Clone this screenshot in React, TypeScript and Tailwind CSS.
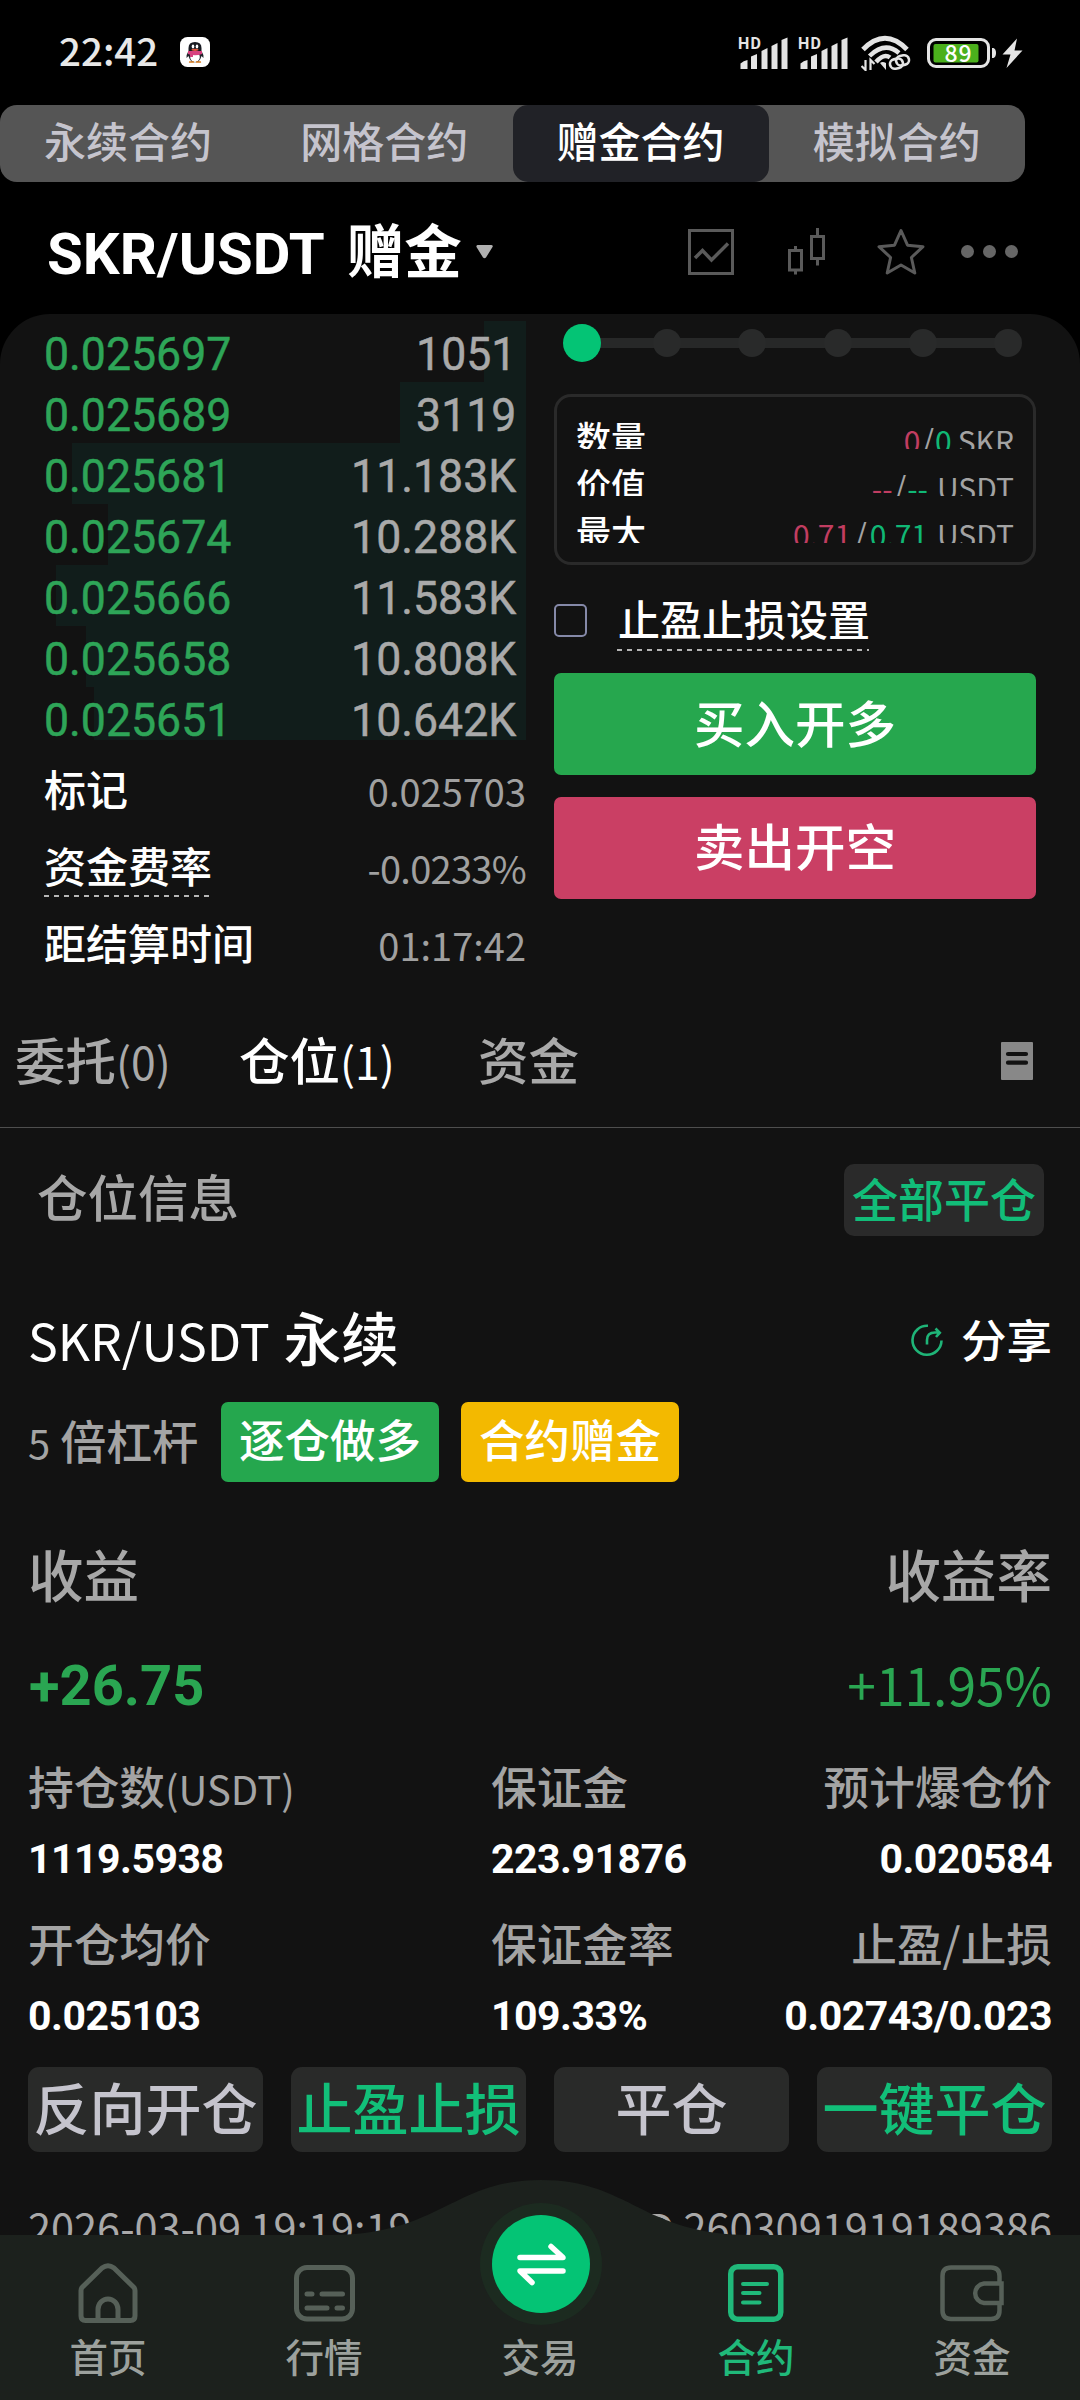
import React from "react";

const CJK = "font-['Noto_Sans_CJK_SC',sans-serif]";
const DIN = "font-['Roboto','Noto_Sans_CJK_SC',sans-serif]";

function SignalBars() {
  return (
    <svg className="overflow-visible" width="52" height="34" viewBox="0 0 52 34" fill="#e4e4e4">
      <text x="0" y="13" fontSize="16" fontWeight="700" fontFamily="Roboto, sans-serif" textLength="23">
        HD
      </text>
      <path d="M2.5 33v-5.500q3-3 7-3.500V33z" />
      <path d="M13 33V20.500l6-2.500V33z" />
      <path d="M23.500 33V15l6-3V33z" />
      <path d="M33.500 33V10l6-3V33z" />
      <path d="M43.500 33V4l6-2.500V33z" />
    </svg>
  );
}

function StatusBar() {
  return (
    <div className="flex h-[105px] items-center pl-[59px] pr-[57px]">
      <span className="mb-[6px] text-[38.5px] font-medium leading-none text-[#e8e8e8]">22:42</span>
      <svg className="ml-[22px] mb-[1px]" width="30" height="30" viewBox="0 0 30 30">
        <rect width="30" height="30" rx="7.500" fill="#fff" />
        <path d="M8 15q-2 3-1.500 6l2-2q1 4 3 5.500l-3 .8h13l-3-.8q2-1.500 3-5.500l2 2q.5-3-1.500-6z" fill="#20242b" />
        <path d="M8.500 15V11q0-6 6.500-6t6.500 6v4z" fill="#181b22" />
        <ellipse cx="15" cy="20" rx="4.800" ry="5" fill="#fff" />
        <path d="M8 14h14v3q-7 2.500-14 0z" fill="#d6417f" />
        <path d="M10 16h3v4h-3z" fill="#d6417f" />
        <ellipse cx="13" cy="9.500" rx="1.300" ry="1.900" fill="#fff" />
        <ellipse cx="17" cy="9.500" rx="1.300" ry="1.900" fill="#fff" />
        <ellipse cx="15" cy="12.800" rx="3.500" ry="1.100" fill="#e4573d" />
        <path d="M9 25h5M16 25h5" stroke="#e88a2e" strokeWidth="1.400" />
      </svg>
      <div className="ml-auto flex items-center">
        <SignalBars />
        <div className="w-[8px]" />
        <SignalBars />
        <svg className="ml-[11px]" width="50" height="36" viewBox="0 0 50 36" fill="none" stroke="#e4e4e4" strokeLinecap="butt">
          <path d="M2 14.500Q24 -8 46 14.500" strokeWidth="5" />
          <path d="M8.500 21Q24 6 38 18" strokeWidth="4.500" />
          <path d="M15 27Q23 18 29 22.500" strokeWidth="4.500" />
          <path d="M19 28q2.500-2 6 0v7z" fill="#e4e4e4" stroke="none" />
          <path d="M4.500 25v10l-4-4M9.500 35V25l4 4" strokeWidth="2.200" />
          <rect x="29" y="24" width="13" height="9.500" rx="4.700" strokeWidth="2.600" transform="rotate(-12 35 29)" />
          <rect x="35" y="20.500" width="13" height="9.500" rx="4.700" strokeWidth="2.600" transform="rotate(-12 42 25)" />
        </svg>
        <svg className="ml-[16px] overflow-visible" width="96" height="32" viewBox="0 0 96 32">
          <rect x="1.500" y="2.500" width="60" height="27" rx="7.500" fill="none" stroke="#e4e4e4" strokeWidth="3" />
          <rect x="6.500" y="7" width="45" height="18.500" rx="2" fill="#4bb01c" />
          <text x="17.500" y="24.500" fontSize="23" fontWeight="500" fill="#fff" fontFamily="Noto Sans CJK SC, sans-serif" textLength="27">
            89
          </text>
          <path d="M65 11h1.500q2.500 1 2.500 5t-2.500 5H65z" fill="#e4e4e4" />
          <path d="M90 1.500L75.500 17.500h8L79.500 31 95.500 13.500h-8z" fill="#e4e4e4" />
        </svg>
      </div>
    </div>
  );
}

const MODES = ["永续合约", "网格合约", "赠金合约", "模拟合约"];

function ModeTabs() {
  return (
    <div className="flex h-[77px] w-[1025px] overflow-hidden rounded-[17px] bg-[#555555]">
      {MODES.map((m, i) => (
        <div
          key={m}
          className={
            "flex flex-1 items-center justify-center pb-[7px] text-[42px] font-medium leading-none " +
            (i === 2 ? "rounded-[15px] bg-[#212227] text-white" : "text-[#c5c4cd]")
          }
        >
          {m}
        </div>
      ))}
    </div>
  );
}

function TitleRow() {
  return (
    <div className="flex h-[132px] items-center pl-[47px] pr-[62px] pt-[7px]">
      <span className={"mt-[4px] text-[58px] font-bold leading-none tracking-[0.1px] text-white " + DIN}>SKR/USDT</span>
      <span className="mb-[6px] ml-[22px] text-[57.500px] font-bold leading-none text-white">赠金</span>
      <svg className="ml-[14px]" width="18" height="14" viewBox="0 0 18 14">
        <path d="M1.500 0h14q2 .5 1 2L10 12.500q-1.500 1.500-3 0L.5 2Q0 .5 1.500 0z" fill="#b0b0b0" />
      </svg>
      <div className="ml-auto flex items-center text-[#5a5a5a]">
        <svg width="46" height="46" viewBox="0 0 46 46" fill="none" stroke="currentColor">
          <rect x="1.500" y="1.500" width="43" height="43" strokeWidth="3" />
          <path d="M7 29l7.500-7.500 9 9.500L40 14.500" strokeWidth="3.500" />
        </svg>
        <svg className="ml-[53px]" width="39" height="47" viewBox="0 0 39 47" fill="none" stroke="currentColor" strokeWidth="3">
          <path d="M2.500 22.500h12V42h-12zM8.500 22.500V18M8.500 42v4.500M24.500 8.500h12v22h-12zM30.500 8.500V0M30.500 30.500V37.500" />
        </svg>
        <svg className="ml-[51px]" width="48" height="47" viewBox="0 0 48 47" fill="none" stroke="currentColor" strokeWidth="3" strokeLinejoin="round">
          <path d="M24 2.500l6.500 14.700 15.500 1.500-11.600 10.800L37.800 45 24 37 10.200 45l3.400-15.500L2 18.700l15.500-1.500z" />
        </svg>
        <div className="ml-[36px] flex gap-[9px]">
          <i className="size-[13px] rounded-full bg-[#666]" />
          <i className="size-[13px] rounded-full bg-[#666]" />
          <i className="size-[13px] rounded-full bg-[#666]" />
        </div>
      </div>
    </div>
  );
}

const BIDS = [
  { price: "0.025697", size: "1051", depth: 42 },
  { price: "0.025689", size: "3119", depth: 126 },
  { price: "0.025681", size: "11.183K", depth: 454 },
  { price: "0.025674", size: "10.288K", depth: 418 },
  { price: "0.025666", size: "11.583K", depth: 470 },
  { price: "0.025658", size: "10.808K", depth: 440 },
  { price: "0.025651", size: "10.642K", depth: 432 },
];

function DashedRule({ className }: { className: string }) {
  return (
    <div
      className={
        "h-[1.500px] bg-[repeating-linear-gradient(90deg,#b5b5b5_0_5px,transparent_5px_10px)] " + className
      }
    />
  );
}

function OrderBook() {
  return (
    <div className="pt-[7px]">
      <div className="h-[419px] overflow-hidden">
        {BIDS.map((b) => (
          <div
            key={b.price}
            className={
              "relative flex h-[61px] items-center justify-between pr-[10px] pt-[5px] text-[46px] leading-none [-webkit-text-stroke:0.500px_currentColor] " +
              DIN
            }
          >
            <div className="absolute inset-y-0 right-0 bg-[#111d1b]" style={{ width: b.depth }} />
            <span className="relative origin-left scale-x-[0.97] text-[#2ea558]">{b.price}</span>
            <span className="relative origin-right scale-x-[0.97] text-[#a9a9a9]">{b.size}</span>
          </div>
        ))}
      </div>
      <div className="mt-[9px]">
        {[
          ["标记", "0.025703"],
          ["资金费率", "-0.0233%"],
          ["距结算时间", "01:17:42"],
        ].map(([k, v], i) => (
          <div key={k} className="relative flex h-[77px] items-center justify-between">
            <span className="text-[42px] font-medium leading-none text-white">{k}</span>
            <span className={"mt-[6px] text-[38px] leading-none text-[#a0a0a0] " + (i === 1 ? "tracking-[-0.700px]" : "")}>{v}</span>
            {i === 1 && <DashedRule className="absolute left-0 top-[69px] w-[166px]" />}
          </div>
        ))}
      </div>
    </div>
  );
}

const AMOUNTS = [
  { label: "数量", short: "0", long: "0", unit: "SKR" },
  { label: "价值", short: "--", long: "--", unit: "USDT" },
  { label: "最大", short: "0.71", long: "0.71", unit: "USDT" },
];

function TradeForm() {
  return (
    <div>
      <div className="relative mx-[9px] mt-[10px] flex h-[38px] items-center justify-between">
        <div className="absolute left-[19px] right-[19px] top-[14px] h-[10px] bg-[#272828]" />
        <i className="relative size-[38px] rounded-full bg-[#04c475]" />
        {[0, 1, 2, 3, 4].map((n) => (
          <i key={n} className="relative mx-[5px] size-[28px] rounded-full bg-[#292a2a]" />
        ))}
      </div>
      <div className="mt-[32px] h-[171px] rounded-[17px] border-[3px] border-[#2a2a2a] pl-[19px] pr-[19px] pt-[21px]">
        {AMOUNTS.map((a, i) => (
          <div key={a.label} className="mb-[16px] flex h-[31px] items-start justify-between overflow-hidden">
            <span className="text-[35px] font-medium leading-[37px] text-white">{a.label}</span>
            <span className="mt-[4px] whitespace-pre text-[30px] leading-[34px] text-[#a3a3a3]">
              <span className="text-[#c13d61]">{a.short}</span>
              <span className={i === 2 ? "px-[3px] text-[32px]" : "px-[1px] text-[32px]"}>/</span>
              <span className="text-[#10b875]">{a.long}</span>
              <span className={i === 0 ? "pl-[6px]" : "pl-[9px]"}>{a.unit}</span>
            </span>
          </div>
        ))}
      </div>
      <div className="relative flex h-[108px] items-center">
        <div className="mt-[3px] h-[33px] w-[33px] rounded-[5px] border-[2.500px] border-[#8589a8]" />
        <span className="mb-[2px] ml-[31px] text-[42px] font-medium leading-none text-white">止盈止损设置</span>
        <DashedRule className="absolute left-[63px] top-[84px] w-[252px]" />
      </div>
      <div className="flex h-[102px] items-center justify-center rounded-[7px] bg-[#26a74e] pb-[6px] text-[50.500px] font-medium leading-none text-white">
        买入开多
      </div>
      <div className="mt-[22px] flex h-[102px] items-center justify-center rounded-[7px] bg-[#ca3f64] pb-[7px] text-[50.500px] font-medium leading-none text-white">
        卖出开空
      </div>
    </div>
  );
}

function PanelTabs() {
  return (
    <div className="flex h-[148px] items-center border-b border-[#4e4e4e] pl-[15px] pr-[47px] pt-[9px] text-[50.500px] font-medium leading-none text-[#a9a9a9]">
      <span className="w-[224px]">
        委托<span className="text-[44.500px] font-normal">(0)</span>
      </span>
      <span className="w-[239px] text-white">
        仓位<span className="text-[44.500px] font-normal">(1)</span>
      </span>
      <span>资金</span>
      <svg className="ml-auto mt-[6px]" width="32" height="38" viewBox="0 0 32 38">
        <rect width="32" height="38" rx="1" fill="#888" />
        <path d="M7 12h18M7 20.700h18" stroke="#121212" strokeWidth="4.200" strokeLinecap="round" />
      </svg>
    </div>
  );
}

const STATS = [
  [
    ["持仓数", "1119.5938", "(USDT)"],
    ["保证金", "223.91876"],
    ["预计爆仓价", "0.020584"],
  ],
  [
    ["开仓均价", "0.025103"],
    ["保证金率", "109.33%"],
    ["止盈", "0.02743/0.023", "/", "止损"],
  ],
];

const ACTIONS = [
  { label: "反向开仓", accent: false },
  { label: "止盈止损", accent: true },
  { label: "平仓", accent: false },
  { label: "一键平仓", accent: true },
];

function Position() {
  return (
    <div>
      <div className="mt-[36px] flex h-[72px] items-center justify-between pl-[37px] pr-[36px]">
        <span className="mb-[10px] text-[50.500px] font-medium leading-none text-[#a7a7a7]">仓位信息</span>
        <div className="flex h-[72px] w-[200px] items-center justify-center rounded-[10px] bg-[#2a2a2a] pb-[7px] text-[46px] font-medium leading-none text-[#12bd79]">
          全部平仓
        </div>
      </div>
      <div className="px-[28px]">
        <div className="mt-[71px] flex h-[60px] items-center justify-between whitespace-nowrap text-white">
          <span className="text-[57.500px] font-medium leading-none">
            <span className="mr-[14px] text-[50px] font-normal">SKR/USDT</span>永续
          </span>
          <span className="flex items-center">
            <svg className="mt-[7px]" width="32" height="33" viewBox="0 0 32 33" fill="none" stroke="#1fb578" strokeWidth="2.600">
              <path d="M17 1.800A14.500 14.500 0 1 0 30.500 16.500" />
              <path d="M16 20.500V16q0-7.500 8-7.500h4.500M24.500 4.500L28.800 8.700 25 13" />
            </svg>
            <span className="ml-[18px] mt-[3px] text-[45.500px] font-medium leading-none">分享</span>
          </span>
        </div>
        <div className="mt-[35px] flex h-[80px] items-center text-[46px] font-medium leading-none">
          <span className="mb-[6px] w-[193px] whitespace-nowrap text-[#a4a4a4]">
            <span className="mr-[10px] text-[40px] font-normal">5</span>倍杠杆
          </span>
          <span className="flex h-[80px] w-[218px] items-center justify-center rounded-[7px] bg-[#25a74e] pb-[7px] text-[45.500px] text-white">逐仓做多</span>
          <span className="ml-[22px] flex h-[80px] w-[218px] items-center justify-center rounded-[7px] bg-[#f3b900] pb-[7px] text-[45.500px] text-white">合约赠金</span>
        </div>
        <div className="mt-[62px] flex h-[60px] items-center justify-between text-[55.500px] font-medium leading-none text-[#a7a7a7]">
          <span>收益</span>
          <span>收益率</span>
        </div>
        <div className="mt-[51px] flex h-[60px] items-center justify-between leading-none text-[#2aa652]">
          <span className={"ml-[1px] mt-[1px] text-[56px] font-bold " + DIN}>+26.75</span>
          <span className="mb-[3px] text-[51.500px]">+11.95%</span>
        </div>
        <div className="mt-[45px]">
          {STATS.map((row, i) => (
            <div key={i} className={"grid grid-cols-[463px_240px_1fr] whitespace-nowrap " + (i ? "mt-[38px]" : "")}>
              {row.map(([label, value, latin, tail], c) => (
                <div key={label} className={c === 2 ? "flex flex-col items-end" : "flex flex-col"}>
                  <span className="flex h-[50px] items-baseline text-[45.700px] font-medium leading-[50px] text-[#a4a4a4]">
                    {label}
                    {latin && <span className={tail ? "text-[46px] font-normal" : "text-[40px] font-normal"}>{latin}</span>}
                    {tail}
                  </span>
                  <span className={"mt-[29px] text-[41px] font-bold leading-[40px] tracking-[-0.500px] text-white " + DIN}>{value}</span>
                </div>
              ))}
            </div>
          ))}
        </div>
        <div className="mt-[31px] grid grid-cols-4 gap-[28px]">
          {ACTIONS.map((a) => (
            <div
              key={a.label}
              className={
                "flex h-[85px] items-center justify-center whitespace-nowrap rounded-[11px] bg-[#292a29] pb-[8px] text-[56px] font-medium leading-none " +
                (a.accent ? "text-[#12bf79]" : "text-[#c5c4cd]")
              }
            >
              {a.label}
            </div>
          ))}
        </div>
        <div className="mt-[50px] flex h-[50px] items-center justify-between text-[41.500px] leading-none text-[#a9a9a9]">
          <span>2026-03-09 19:19:19</span>
          <span>ID 2603091919189386</span>
        </div>
      </div>
    </div>
  );
}

function NavItem({ label, active, children }: { label: string; active?: boolean; children?: React.ReactNode }) {
  return (
    <div className={"flex flex-col items-center " + (active ? "text-[#20b97a]" : "text-[#566058]")}>
      <div className="flex h-[60px] items-center">{children}</div>
      <span className={"mt-[12px] text-[38.500px] font-medium leading-[40px] " + (active ? "" : "text-[#9ca19d]")}>{label}</span>
    </div>
  );
}

function BottomNav() {
  return (
    <div className="absolute inset-x-0 bottom-0 h-[220px]">
      <svg className="absolute inset-0" width="1080" height="220" viewBox="0 0 1080 220">
        <path d="M0 55H330C440 55 452 0 541 0S642 55 752 55H1080V220H0z" fill="#1c211d" />
        <circle cx="541" cy="84" r="61" fill="#1c2b20" />
      </svg>
      <div className="relative grid grid-cols-5 pt-[83px]">
        <NavItem label="首页">
          <svg width="60" height="60" viewBox="0 0 60 60" fill="none" stroke="currentColor" strokeWidth="5" strokeLinejoin="round">
            <path d="M3 27.500q0-2 1.500-3.500L24 5q6-4.500 12 0l19.500 19q1.500 1.500 1.500 3.500V53q0 4.500-4.500 4.500h-45Q3 57.500 3 53z" />
            <path d="M20 57V46.500a10 10.500 0 0 1 20 0V57" />
          </svg>
        </NavItem>
        <NavItem label="行情">
          <svg width="61" height="57" viewBox="0 0 61 57" fill="none" stroke="currentColor" strokeWidth="5" strokeLinecap="round">
            <rect x="2.500" y="2.500" width="56" height="51.500" rx="10.500" />
            <path d="M13 29h5M28 29h20.500M13 43h20M43 43h5.500" />
          </svg>
        </NavItem>
        <NavItem label="交易" />
        <NavItem label="合约" active>
          <svg width="56" height="58" viewBox="0 0 56 58" fill="none" stroke="currentColor" strokeWidth="5.500" strokeLinecap="round">
            <rect x="2.750" y="2.750" width="50" height="52.500" rx="7" />
            <path d="M15 20h24M15 29h16.500M15 38.500h16.500" strokeWidth="4" />
          </svg>
        </NavItem>
        <NavItem label="资金">
          <svg width="64" height="57" viewBox="0 0 64 57" fill="none" stroke="currentColor" strokeWidth="4.500">
            <path d="M59.500 17.500V11q0-8.500-8.500-8.500H11Q2.500 2.500 2.500 11v34.500q0 8.500 8.500 8.500h40q8.500 0 8.500-8.500V39" />
            <path d="M61.500 18.500H44a9.800 9.800 0 0 0 0 19.500h17.500z" />
          </svg>
        </NavItem>
      </div>
      <div className="absolute left-[492px] top-[35px] flex size-[98px] items-center justify-center rounded-full bg-[#04c475]">
        <svg width="50" height="44" viewBox="0 0 50 44" fill="none" stroke="#fff" strokeWidth="5.500" strokeLinecap="round" strokeLinejoin="round">
          <path d="M4 15.500h43L35 4.500M47 29H4l12 11.500" />
        </svg>
      </div>
    </div>
  );
}

export default function App() {
  return (
    <div lang="zh-CN" className={"relative h-[2400px] w-[1080px] overflow-hidden bg-black " + CJK}>
      <StatusBar />
      <ModeTabs />
      <TitleRow />
      <div className="h-[2086px] rounded-t-[50px] bg-[#121212]">
        <div className="grid h-[666px] grid-cols-2 gap-[28px] px-[44px]">
          <OrderBook />
          <TradeForm />
        </div>
        <PanelTabs />
        <Position />
      </div>
      <BottomNav />
    </div>
  );
}
